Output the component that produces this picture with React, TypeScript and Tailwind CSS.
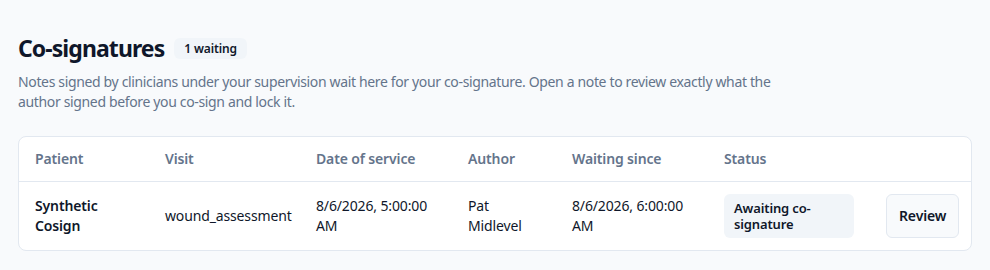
export default function App() {
  return (
    <div
      className="min-h-screen bg-[#f8fafc] px-[18px] pt-8 text-[#0f172a]"
      style={{ fontFamily: '"Noto Sans", "Open Sans", sans-serif' }}
    >
      <div className="flex items-center gap-2.5">
        <h1 className="text-[23px] font-bold leading-8 tracking-[-0.04em]">Co-signatures</h1>
        <span className="rounded-md bg-[#f1f5f9] px-2.5 py-0.5 text-xs font-semibold leading-[17px] tracking-[-0.01em] text-[#0f172a]">
          1 waiting
        </span>
      </div>
      <p className="mt-2 max-w-[790px] text-sm leading-5 tracking-[-0.025em] text-[#64748b]">
        Notes signed by clinicians under your supervision wait here for your co-signature. Open a note to
        review exactly what the author signed before you co-sign and lock it.
      </p>

      <div className="mt-6 w-[954px] overflow-hidden rounded-lg border border-[#e2e8f0] bg-white">
        <table className="w-full table-fixed text-left text-sm tracking-[-0.01em]">
          <thead>
            <tr className="border-b border-[#e2e8f0] text-[#64748b]">
              <th className="w-[130px] px-4 py-3 font-semibold">Patient</th>
              <th className="w-[151px] px-4 py-3 font-semibold">Visit</th>
              <th className="w-[152px] px-4 py-3 font-semibold">Date of service</th>
              <th className="w-[104px] px-4 py-3 font-semibold">Author</th>
              <th className="w-[152px] px-4 py-3 font-semibold">Waiting since</th>
              <th className="w-[162px] px-4 py-3 font-semibold">Status</th>
              <th className="px-4 py-3"></th>
            </tr>
          </thead>
          <tbody>
            <tr className="text-[#0f172a]">
              <td className="px-4 py-3 font-semibold">Synthetic Cosign</td>
              <td className="px-4 py-3">wound_assessment</td>
              <td className="px-4 py-3">8/6/2026, 5:00:00 AM</td>
              <td className="px-4 py-3">Pat Midlevel</td>
              <td className="px-4 py-3">8/6/2026, 6:00:00 AM</td>
              <td className="px-4 py-3">
                <span className="block rounded-md bg-[#f1f5f9] px-2.5 py-1.5 text-[13px] font-semibold leading-4">
                  Awaiting co-signature
                </span>
              </td>
              <td className="px-4 py-3 text-right">
                <button className="h-11 rounded-md border border-[#e2e8f0] bg-[#f8fafc] px-3 text-sm font-semibold">
                  Review
                </button>
              </td>
            </tr>
          </tbody>
        </table>
      </div>
    </div>
  );
}
